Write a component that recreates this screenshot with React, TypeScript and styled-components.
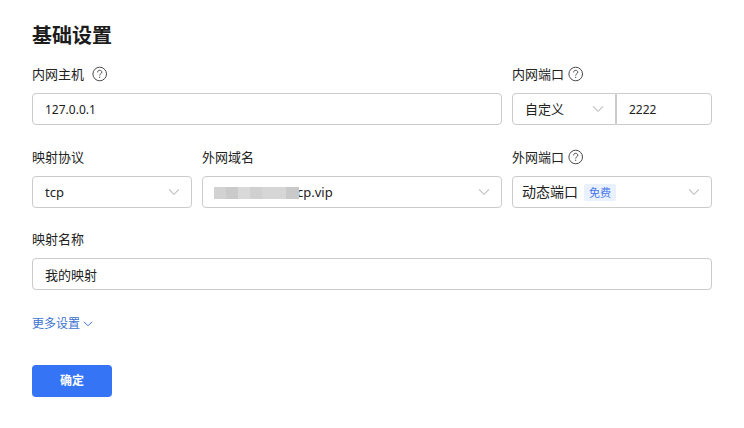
import React from "react";
import styled, { createGlobalStyle } from "styled-components";

const GlobalStyle = createGlobalStyle`
  * { box-sizing: border-box; }
  body {
    margin: 0;
    background: #fff;
    color: #222;
    font-family: "Noto Sans", "Noto Sans CJK SC", sans-serif;
    font-size: 13px;
    line-height: 20px;
  }
`;

const Form = styled.form`
  padding: 22px 32px 31px;
`;

const Title = styled.h1`
  margin: 0 0 14px;
  font-size: 20px;
  line-height: 28px;
  font-weight: 700;
  color: #1c1c1c;
`;

const Row = styled.div<{ $columns: string; $gap?: number }>`
  display: grid;
  grid-template-columns: ${(p) => p.$columns};
  column-gap: 10px;
  margin-bottom: ${(p) => p.$gap ?? 22}px;
`;

const Field = styled.div`
  min-width: 0;
`;

const LabelLine = styled.div<{ $gap?: number }>`
  display: flex;
  align-items: center;
  gap: ${(p) => p.$gap ?? 4}px;
  height: 20px;
  margin-bottom: 9px;
`;

const Input = styled.input`
  display: block;
  width: 100%;
  min-width: 0;
  height: 32px;
  padding: 0 12px;
  border: 1px solid #cbcbcb;
  border-radius: 4px;
  background: #fff;
  color: #222;
  font: inherit;
  outline-color: #3370f6;
`;

const NumericInput = styled(Input)`
  font-size: 12px;
`;

const PortGroup = styled.div`
  display: grid;
  grid-template-columns: 104px 1fr;

  select {
    border-radius: 4px 0 0 4px;
  }
  input {
    border-radius: 0 4px 4px 0;
  }
`;

const SelectBox = styled.div`
  position: relative;
`;

const Select = styled.select<{ $indent?: number; $large?: boolean }>`
  display: block;
  width: 100%;
  height: 32px;
  padding: 0 32px 0 ${(p) => p.$indent ?? 12}px;
  border: 1px solid #cbcbcb;
  border-radius: 4px;
  background: #fff;
  color: #222;
  font: inherit;
  font-size: ${(p) => (p.$large ? 14 : 13)}px;
  appearance: none;
  outline-color: #3370f6;
`;

const Arrow = styled.svg`
  position: absolute;
  top: 10px;
  right: 12px;
  width: 12px;
  height: 12px;
  pointer-events: none;
`;

const Tag = styled.span`
  position: absolute;
  top: 8px;
  left: 72px;
  width: 32px;
  height: 17px;
  border-radius: 2px;
  background: #e9f1fe;
  color: #4677ea;
  font-size: 11px;
  line-height: 17px;
  text-align: center;
  pointer-events: none;
`;

const Mosaic = styled.svg`
  position: absolute;
  top: 11px;
  left: 12px;
  width: 85px;
  height: 12px;
  pointer-events: none;
`;

const HelpButton = styled.button`
  display: flex;
  padding: 0;
  border: 0;
  background: none;
  color: #4a4a4a;
`;

const MoreLink = styled.a`
  display: inline-flex;
  align-items: center;
  gap: 3px;
  color: #3c72d0;
  font-size: 12px;
  text-decoration: none;
`;

const Submit = styled.button`
  display: block;
  min-width: 80px;
  height: 32px;
  margin-top: 31px;
  border: 0;
  border-radius: 4px;
  background: #3674f6;
  color: #fff;
  font: inherit;
  font-size: 12px;
  font-weight: 700;
`;

function Help({ label }: { label: string }) {
  return (
    <HelpButton type="button" aria-label={label}>
      <svg width="16" height="16" viewBox="0 0 16 16" fill="none" stroke="currentColor">
        <circle cx="7.7" cy="8" r="6.8" />
        <path d="M5.6 6.4C5.6 5 6.5 4.3 7.7 4.3s2.1.8 2.1 1.9c0 1.5-2.1 1.5-2.1 3.3" />
        <path d="M7.7 10.7v1.2" />
      </svg>
    </HelpButton>
  );
}

function SelectArrow() {
  return (
    <Arrow viewBox="0 0 12 12" fill="none" stroke="#bebebe" strokeWidth="1.1">
      <path d="M1 3.3l5 5 5-5" />
    </Arrow>
  );
}

const shades = ["#d2d2d2", "#cacaca", "#d9d9d9", "#d0d0d0", "#d6d6d6", "#d6d6d6", "#c9c9c9"];

export default function App() {
  return (
    <>
      <GlobalStyle />
      <Form onSubmit={(e) => e.preventDefault()}>
        <Title>基础设置</Title>

        <Row $columns="1fr 200px">
          <Field>
            <LabelLine $gap={8}>
              <label htmlFor="host">内网主机</label>
              <Help label="内网主机" />
            </LabelLine>
            <NumericInput id="host" defaultValue="127.0.0.1" />
          </Field>
          <Field>
            <LabelLine>
              <label htmlFor="port">内网端口</label>
              <Help label="内网端口" />
            </LabelLine>
            <PortGroup>
              <SelectBox>
                <Select aria-label="内网端口"><option>自定义</option></Select>
                <SelectArrow />
              </SelectBox>
              <NumericInput id="port" defaultValue="2222" />
            </PortGroup>
          </Field>
        </Row>

        <Row $columns="160px 1fr 200px" $gap={21}>
          <Field>
            <LabelLine><label htmlFor="protocol">映射协议</label></LabelLine>
            <SelectBox>
              <Select id="protocol"><option>tcp</option></Select>
              <SelectArrow />
            </SelectBox>
          </Field>
          <Field>
            <LabelLine><label htmlFor="domain">外网域名</label></LabelLine>
            <SelectBox>
              <Select id="domain" $indent={94}><option>cp.vip</option></Select>
              <Mosaic viewBox="0 0 85 12" shapeRendering="crispEdges" preserveAspectRatio="none">
                {shades.map((fill, i) => (
                  <rect key={i} x={i * 12} width="13" height="12" fill={fill} />
                ))}
              </Mosaic>
              <SelectArrow />
            </SelectBox>
          </Field>
          <Field>
            <LabelLine>
              <label htmlFor="remote">外网端口</label>
              <Help label="外网端口" />
            </LabelLine>
            <SelectBox>
              <Select id="remote" $indent={9} $large><option>动态端口</option></Select>
              <Tag>免费</Tag>
              <SelectArrow />
            </SelectBox>
          </Field>
        </Row>

        <Row $columns="1fr" $gap={23}>
          <Field>
            <LabelLine><label htmlFor="name">映射名称</label></LabelLine>
            <Input id="name" defaultValue="我的映射" />
          </Field>
        </Row>

        <MoreLink href="#more">
          更多设置
          <svg width="10" height="10" viewBox="0 0 10 10" fill="none" stroke="currentColor">
            <path d="M1 2.8l4 4 4-4" />
          </svg>
        </MoreLink>

        <Submit type="submit">确定</Submit>
      </Form>
    </>
  );
}
